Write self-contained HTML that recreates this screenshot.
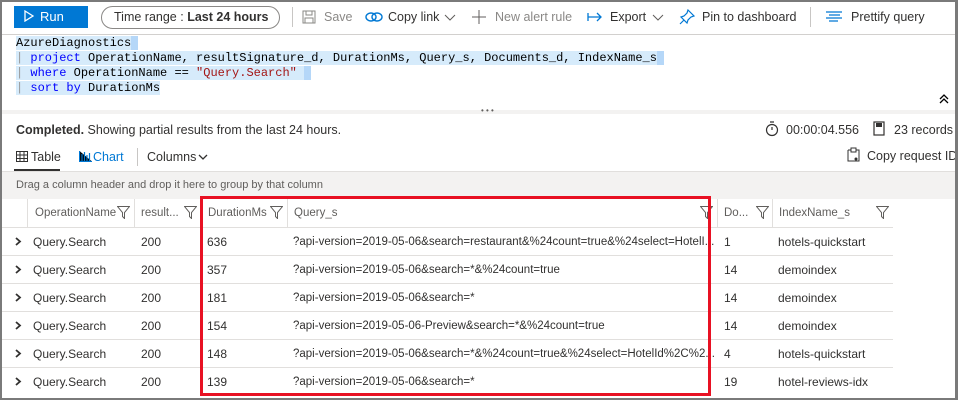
<!DOCTYPE html>
<html><head><meta charset="utf-8"><style>
*{margin:0;padding:0;box-sizing:border-box}
body{width:958px;height:400px;background:#fff;font-family:"Liberation Sans",sans-serif;font-size:12px;color:#323130;position:relative;overflow:hidden}
.a{position:absolute;white-space:nowrap}
.frame{position:absolute;left:0;top:0;width:958px;height:400px;border:2px solid #7a7a7a;border-right-width:3px;pointer-events:none}
.mono{font-family:"Liberation Mono",monospace;font-size:12px;color:#000}
.kw{color:#0000ff}.str{color:#a31515}
.hl{background:#d6ebfb}
.tb{color:#323130;font-size:12.5px;top:10px}
.gray{color:#8a8886}
.col{position:absolute;top:199px;height:29px;width:1px;background:#e1dfdd}
.hdr{top:207px;color:#605e5c;font-size:11.5px}
.row{position:absolute;left:2px;width:891px;height:1px;background:#e1dfdd}
.cell{font-size:12px;color:#323130}
.f{position:absolute;top:206px}
</style></head><body>
<div class="a" style="left:14px;top:6px;width:74px;height:22px;background:#0078d4;color:#fff;font-size:13px;line-height:22px;padding-left:10px">
<svg width="10" height="12" style="vertical-align:-1px;margin-right:6px"><path d="M1 1 L9 6 L1 11 Z" fill="none" stroke="#fff" stroke-width="1.3"/></svg>Run</div>
<div class="a" style="left:101px;top:6px;width:179px;height:23px;border:1px solid #8a8886;border-radius:12px;font-size:12.5px;line-height:21px;padding-left:12px">Time range : <b style="font-weight:bold;color:#323130">Last 24 hours</b></div>
<div class="a" style="left:292px;top:7px;width:1px;height:20px;background:#c8c6c4"></div>
<svg class="a" style="left:302px;top:10px" width="14" height="14"><rect x="1" y="1" width="12" height="12" fill="none" stroke="#8a8886"/><rect x="4" y="1" width="6" height="4" fill="none" stroke="#8a8886"/><rect x="3" y="8" width="8" height="5" fill="none" stroke="#8a8886"/></svg>
<div class="a tb gray" style="left:324px">Save</div>
<svg class="a" style="left:365px;top:11px" width="18" height="12"><ellipse cx="6" cy="6" rx="5" ry="4" fill="none" stroke="#0078d4" stroke-width="1.4"/><ellipse cx="12" cy="6" rx="5" ry="4" fill="none" stroke="#0078d4" stroke-width="1.4"/></svg>
<div class="a tb" style="left:388px">Copy link</div>
<svg class="a" style="left:444px;top:14px" width="12" height="8"><path d="M1 1 L6 6 L11 1" fill="none" stroke="#605e5c"/></svg>
<svg class="a" style="left:472px;top:10px" width="14" height="14"><path d="M7 0V14M0 7H14" stroke="#605e5c"/></svg>
<div class="a tb gray" style="left:495px">New alert rule</div>
<svg class="a" style="left:587px;top:12px" width="16" height="10"><path d="M1 1V9M1 5H14M10 1L14 5L10 9" fill="none" stroke="#0078d4" stroke-width="1.3"/></svg>
<div class="a tb" style="left:610px">Export</div>
<svg class="a" style="left:652px;top:14px" width="12" height="8"><path d="M1 1 L6 6 L11 1" fill="none" stroke="#605e5c"/></svg>
<svg class="a" style="left:679px;top:9px" width="16" height="16"><path d="M9 1L15 7L12 8L9 11L8 14L2 8L5 7L8 4Z M5 11L1 15" fill="none" stroke="#0078d4" stroke-width="1.2"/></svg>
<div class="a tb" style="left:702px">Pin to dashboard</div>
<div class="a" style="left:810px;top:7px;width:1px;height:20px;background:#c8c6c4"></div>
<svg class="a" style="left:826px;top:11px" width="16" height="12"><path d="M0 1H16M3 4H14M0 7H16M3 10H12" stroke="#0078d4" stroke-width="1.3"/></svg>
<div class="a tb" style="left:851px">Prettify query</div>
<div class="a" style="left:2px;top:34px;width:953px;height:1px;background:#d2d0ce"></div>
<div class="a mono" style="left:16px;top:36px;line-height:15px">
<div><span class="hl">AzureDiagnostics</span><span style="background:#b5d7f8">&nbsp;</span></div>
<div><span class="hl"><span style="color:#999"> | </span><span class="kw">project</span> OperationName, resultSignature_d, DurationMs, Query_s, Documents_d, IndexName_s</span><span style="background:#b5d7f8">&nbsp;</span></div>
<div><span class="hl"><span style="color:#999"> | </span><span class="kw">where</span> OperationName == <span class="str">"Query.Search"</span> </span><span style="background:#b5d7f8">&nbsp;</span></div>
<div><span class="hl"><span style="color:#999"> | </span><span class="kw">sort by</span> DurationMs </span></div>
</div>
<svg class="a" style="left:938px;top:93px" width="12" height="12"><path d="M2 6L6 2L10 6M2 10L6 6L10 10" fill="none" stroke="#000" stroke-width="1.3"/></svg>
<div class="a" style="left:2px;top:110px;width:953px;height:4px;background:#f3f2f1"></div>
<div class="a" style="left:481px;top:106px;font-size:8px;color:#605e5c">• • •</div>
<div class="a" style="left:16px;top:123px;font-size:12.5px"><b>Completed.</b> Showing partial results from the last 24 hours.</div>
<svg class="a" style="left:765px;top:121px" width="14" height="16"><circle cx="7" cy="9" r="5.5" fill="none" stroke="#323130" stroke-width="1.2"/><path d="M5 1H9M7 9V6" stroke="#323130" stroke-width="1.2"/></svg>
<div class="a" style="left:786px;top:123px;font-size:12.5px">00:00:04.556</div>
<svg class="a" style="left:873px;top:121px" width="12" height="15"><rect x="1" y="1" width="10" height="13" fill="none" stroke="#323130" stroke-width="1.2"/><rect x="3" y="2" width="6" height="4" fill="#323130"/></svg>
<div class="a" style="left:894px;top:123px;font-size:12.5px">23 records</div>
<svg class="a" style="left:16px;top:151px" width="12" height="11"><rect x="0.5" y="0.5" width="11" height="10" fill="none" stroke="#323130"/><path d="M0 4H12M0 7.5H12M4 0V11M8 0V11" stroke="#323130"/></svg>
<div class="a" style="left:31px;top:150px;font-size:12.5px">Table</div>
<div class="a" style="left:14px;top:169px;width:46px;height:2px;background:#323130"></div>
<svg class="a" style="left:79px;top:151px" width="13" height="11"><path d="M0.5 0V10.5H13M3 3V10M5.5 1V10M8 4V10M10.5 2V10" stroke="#0078d4" stroke-width="1.2"/></svg>
<div class="a" style="left:93px;top:150px;font-size:12.5px;color:#0078d4">Chart</div>
<div class="a" style="left:137px;top:148px;width:1px;height:18px;background:#c8c6c4"></div>
<div class="a" style="left:147px;top:150px;font-size:12.5px">Columns</div>
<svg class="a" style="left:198px;top:154px" width="10" height="7"><path d="M1 1L5 5L9 1" fill="none" stroke="#323130" stroke-width="1.3"/></svg>
<svg class="a" style="left:847px;top:147px" width="13" height="15"><path d="M1 3H4M9 3H12V14H1V3M4 1H9V5H4Z" fill="none" stroke="#323130"/><circle cx="9" cy="12" r="1.5" fill="#323130"/></svg>
<div class="a" style="left:867px;top:149px;font-size:12.5px">Copy request ID</div>
<div class="a" style="left:2px;top:171px;width:953px;height:1px;background:#e1dfdd"></div>
<div class="a" style="left:2px;top:172px;width:953px;height:27px;background:#f3f2f1"></div>
<div class="a" style="left:16px;top:179px;font-size:11px;color:#605e5c">Drag a column header and drop it here to group by that column</div>
<div class="col" style="left:27px"></div>
<div class="col" style="left:134px"></div>
<div class="col" style="left:201px"></div>
<div class="col" style="left:287px"></div>
<div class="col" style="left:717px"></div>
<div class="col" style="left:772px"></div>
<div class="a hdr" style="left:35px">OperationName</div>
<div class="a hdr" style="left:141px">result...</div>
<div class="a hdr" style="left:208px">DurationMs</div>
<div class="a hdr" style="left:294px">Query_s</div>
<div class="a hdr" style="left:724px">Do...</div>
<div class="a hdr" style="left:779px">IndexName_s</div>
<svg class="f" style="left:117px" width="13" height="13"><path d="M0.5 0.5H12.5L7.5 6.5V12.5L5.5 10.5V6.5Z" fill="none" stroke="#605e5c"/></svg>
<svg class="f" style="left:184px" width="13" height="13"><path d="M0.5 0.5H12.5L7.5 6.5V12.5L5.5 10.5V6.5Z" fill="none" stroke="#605e5c"/></svg>
<svg class="f" style="left:270px" width="13" height="13"><path d="M0.5 0.5H12.5L7.5 6.5V12.5L5.5 10.5V6.5Z" fill="none" stroke="#605e5c"/></svg>
<svg class="f" style="left:700px" width="13" height="13"><path d="M0.5 0.5H12.5L7.5 6.5V12.5L5.5 10.5V6.5Z" fill="none" stroke="#605e5c"/></svg>
<svg class="f" style="left:756px" width="13" height="13"><path d="M0.5 0.5H12.5L7.5 6.5V12.5L5.5 10.5V6.5Z" fill="none" stroke="#605e5c"/></svg>
<svg class="f" style="left:876px" width="13" height="13"><path d="M0.5 0.5H12.5L7.5 6.5V12.5L5.5 10.5V6.5Z" fill="none" stroke="#605e5c"/></svg>
<div class="row" style="top:227px"></div>
<div class="row" style="top:255px"></div>
<div class="row" style="top:283px"></div>
<div class="row" style="top:311px"></div>
<div class="row" style="top:339px"></div>
<div class="row" style="top:367px"></div>
<svg class="a" style="left:14px;top:237px" width="8" height="150"><g fill="none" stroke="#323130" stroke-width="1.8"><path d="M2 1L6 4.5L2 8"/><path d="M2 29L6 32.5L2 36"/><path d="M2 57L6 60.5L2 64"/><path d="M2 85L6 88.5L2 92"/><path d="M2 113L6 116.5L2 120"/><path d="M2 141L6 144.5L2 148"/></g></svg>
<div class="a cell" style="left:33px;top:228px;line-height:28px"><div>Query.Search</div><div>Query.Search</div><div>Query.Search</div><div>Query.Search</div><div>Query.Search</div><div>Query.Search</div></div>
<div class="a cell" style="left:141px;top:228px;line-height:28px"><div>200</div><div>200</div><div>200</div><div>200</div><div>200</div><div>200</div></div>
<div class="a cell" style="left:207px;top:228px;line-height:28px"><div>636</div><div>357</div><div>181</div><div>154</div><div>148</div><div>139</div></div>
<div class="a cell" style="left:293px;top:228px;line-height:28px;font-size:11.5px"><div>?api-version=2019-05-06&amp;search=restaurant&amp;%24count=true&amp;%24select=HotelI...</div><div>?api-version=2019-05-06&amp;search=*&amp;%24count=true</div><div>?api-version=2019-05-06&amp;search=*</div><div>?api-version=2019-05-06-Preview&amp;search=*&amp;%24count=true</div><div>?api-version=2019-05-06&amp;search=*&amp;%24count=true&amp;%24select=HotelId%2C%2...</div><div>?api-version=2019-05-06&amp;search=*</div></div>
<div class="a cell" style="left:724px;top:228px;line-height:28px"><div>1</div><div>14</div><div>14</div><div>14</div><div>4</div><div>19</div></div>
<div class="a cell" style="left:778px;top:228px;line-height:28px"><div>hotels-quickstart</div><div>demoindex</div><div>demoindex</div><div>demoindex</div><div>hotels-quickstart</div><div>hotel-reviews-idx</div></div>
<div class="a" style="left:200px;top:196px;width:511px;height:200px;border:3px solid #e81123"></div>
<div class="frame"></div>
</body></html>
